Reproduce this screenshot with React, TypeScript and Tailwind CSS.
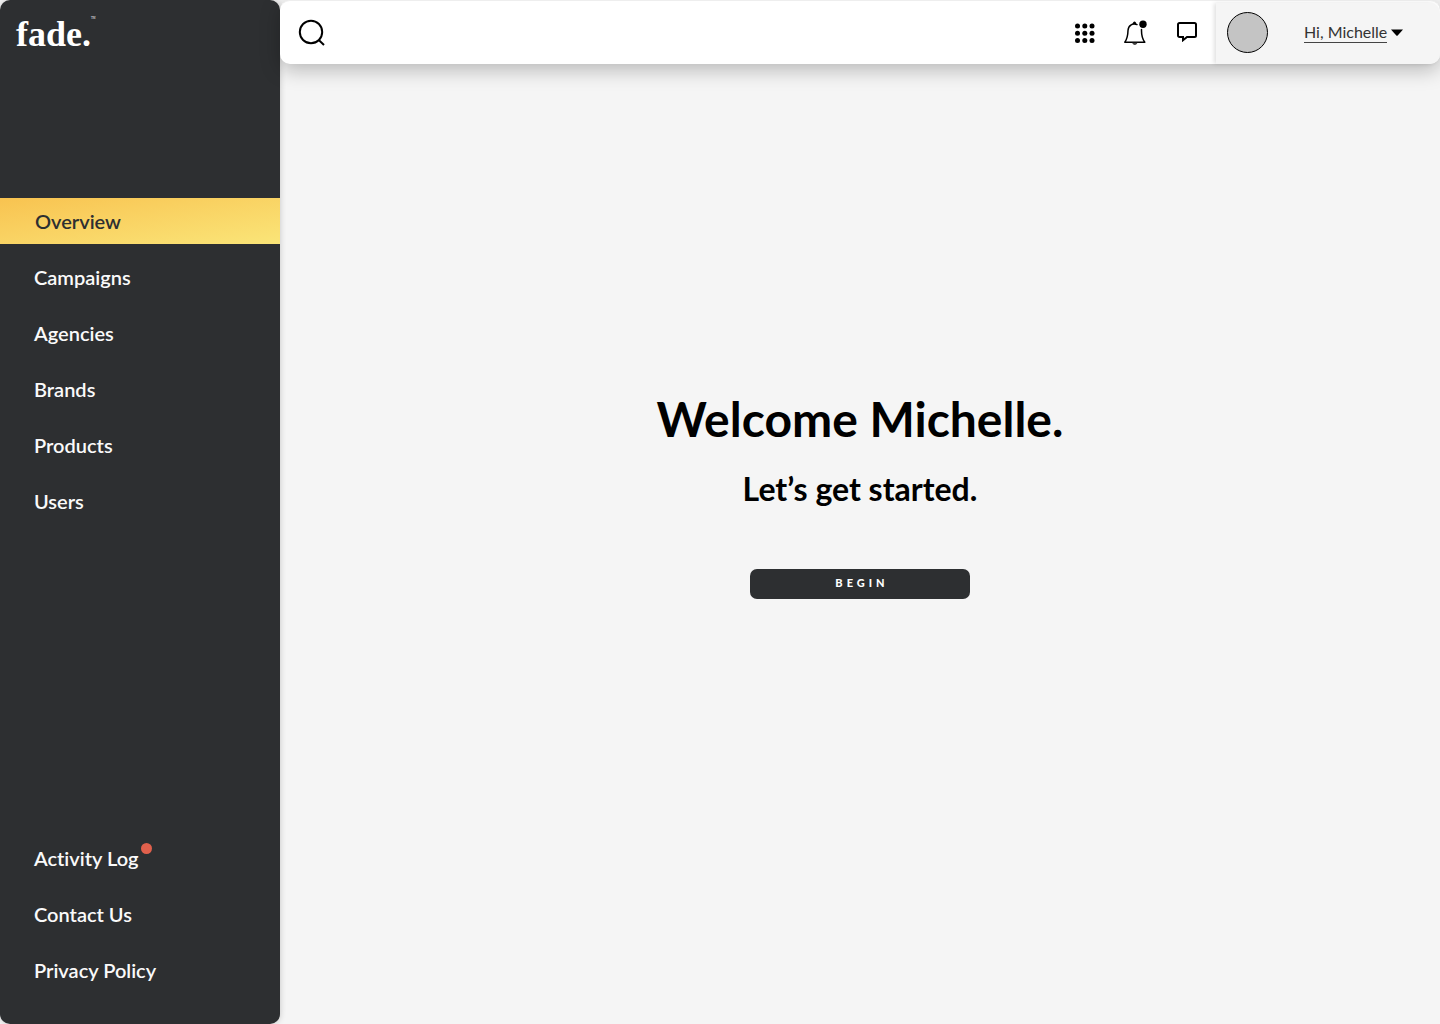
import React from "react";

const mainLinks = ["Campaigns", "Agencies", "Brands", "Products", "Users"];
const navLink = "flex h-[46px] items-center px-[34px] text-xl font-semibold";

function SearchIcon() {
  return (
    <svg width="28" height="28" viewBox="0 0 28 28" fill="none" stroke="#000" strokeWidth="2" aria-hidden="true">
      <circle cx="13" cy="13" r="11.2" />
      <path d="M20.5 20.8 26 26" />
    </svg>
  );
}

function GridIcon() {
  const spots = [2.5, 9.8, 17];
  return (
    <svg width="20" height="20" viewBox="0 0 20 20" aria-hidden="true">
      {spots.map((y) => spots.map((x) => <circle key={`${x}-${y}`} cx={x} cy={y + 0.5} r="2.5" />))}
    </svg>
  );
}

function BellIcon() {
  return (
    <svg width="24" height="26" viewBox="0 0 24 26" fill="none" aria-hidden="true">
      <path
        d="M13 4.600C8.200 2.800 4.200 5.600 4 10.500c-.1 5-.5 8-3.200 11.700h20c-2.800-3.700-3.300-6.600-3.300-11.500V9.500"
        stroke="#000"
        strokeWidth="1.500"
        strokeLinejoin="round"
        strokeLinecap="round"
      />
      <path d="M8.600 4c.2-1.700 1-2.600 1.900-2.600s1.700.9 1.900 2.600z" fill="#000" />
      <path d="M8.300 22.800h5c-.2 1.300-1.200 2.200-2.500 2.200s-2.300-.9-2.500-2.200z" fill="#444" />
      <circle cx="19" cy="4.200" r="3.700" fill="#000" />
    </svg>
  );
}

function ChatIcon() {
  return (
    <svg width="20" height="20" viewBox="0 0 20 20" fill="none" stroke="#000" strokeWidth="2" aria-hidden="true">
      <path d="M2.500 1h15c.9 0 1.500.6 1.500 1.500v11c0 .9-.6 1.500-1.500 1.500H10l-4 3.200V15H2.500C1.600 15 1 14.400 1 13.500v-11C1 1.600 1.600 1 2.500 1z" />
    </svg>
  );
}

export default function App() {
  return (
    <div className="flex min-h-screen bg-[#f5f5f5] font-['Lato',sans-serif] text-black [font-variant-ligatures:none]">
      <aside className="flex w-[280px] shrink-0 flex-col rounded-[10px] bg-[#2d2f31] text-[#fafafa] shadow-[0_0_6px_rgba(0,0,0,0.2)]">
        <a href="#home" className="flex h-[198px] items-start px-4 pt-3 font-['Liberation_Serif',serif] text-white">
          <span className="text-[36px] leading-[44px] font-bold">fade.</span>
          <span className="pt-1 text-[3px] leading-[4px]">TM</span>
        </a>
        <nav aria-label="Main" className="flex flex-col gap-[10px]">
          <a
            href="#overview"
            aria-current="page"
            className="flex h-[46px] items-center bg-linear-to-br from-[#f8c350] to-[#fae578] px-[35px] text-xl font-semibold text-[#2d2f31]"
          >
            Overview
          </a>
          {mainLinks.map((label) => (
            <a key={label} href={`#${label.toLowerCase()}`} className={navLink}>
              {label}
            </a>
          ))}
        </nav>
        <nav aria-label="Support" className="mt-auto flex flex-col gap-[10px] pb-[31px]">
          <a href="#activity" className={navLink}>
            Activity Log
            <span className="mb-5 ml-[2px] size-[11px] rounded-full bg-[#e0604c]" />
          </a>
          <a href="#contact" className={navLink}>
            Contact Us
          </a>
          <a href="#privacy" className={navLink}>
            Privacy Policy
          </a>
        </nav>
      </aside>

      <div className="flex min-w-0 flex-1 flex-col">
        <header className="flex h-16 items-stretch rounded-[10px] border-t border-[#eeeeee] bg-white shadow-[0_6px_20px_rgba(0,0,0,0.25)]">
          <button type="button" aria-label="Search" className="ml-[18px]">
            <SearchIcon />
          </button>
          <div className="mr-[19px] ml-auto flex items-center gap-[29px]">
            <button type="button" aria-label="Apps">
              <GridIcon />
            </button>
            <button type="button" aria-label="Notifications">
              <BellIcon />
            </button>
            <button type="button" aria-label="Messages" className="pb-[2px]">
              <ChatIcon />
            </button>
          </div>
          <div className="mt-[2px] flex w-[224px] items-center rounded-r-[10px] bg-[#f5f5f5] pb-[2px] pl-[11px] shadow-[-2px_0_4px_rgba(0,0,0,0.12)]">
            <span className="size-[41px] rounded-full border border-black bg-[#c4c4c4]" />
            <button type="button" className="ml-9 flex items-center gap-1 text-base text-[#333]">
              <span className="border-b border-[#444] leading-5">Hi, Michelle</span>
              <svg width="12" height="7" viewBox="0 0 12 7" aria-hidden="true">
                <path d="M0 .5h12L6.700 6.500q-.7.600-1.400 0z" fill="#000" />
              </svg>
            </button>
          </div>
        </header>

        <main className="flex flex-1 flex-col items-center justify-center pb-[99px] text-center">
          <h1 className="text-5xl leading-[58px] font-bold">Welcome Michelle.</h1>
          <h2 className="mt-5 text-[32px] leading-[42px] font-bold">Let’s get started.</h2>
          <button
            type="button"
            className="mt-[59px] flex h-[30px] w-[220px] justify-center rounded-[7px] bg-[#2d2f31] pt-[6px] pl-1 text-[11px] leading-4 font-black tracking-[4px] text-white"
          >
            BEGIN
          </button>
        </main>
      </div>
    </div>
  );
}
